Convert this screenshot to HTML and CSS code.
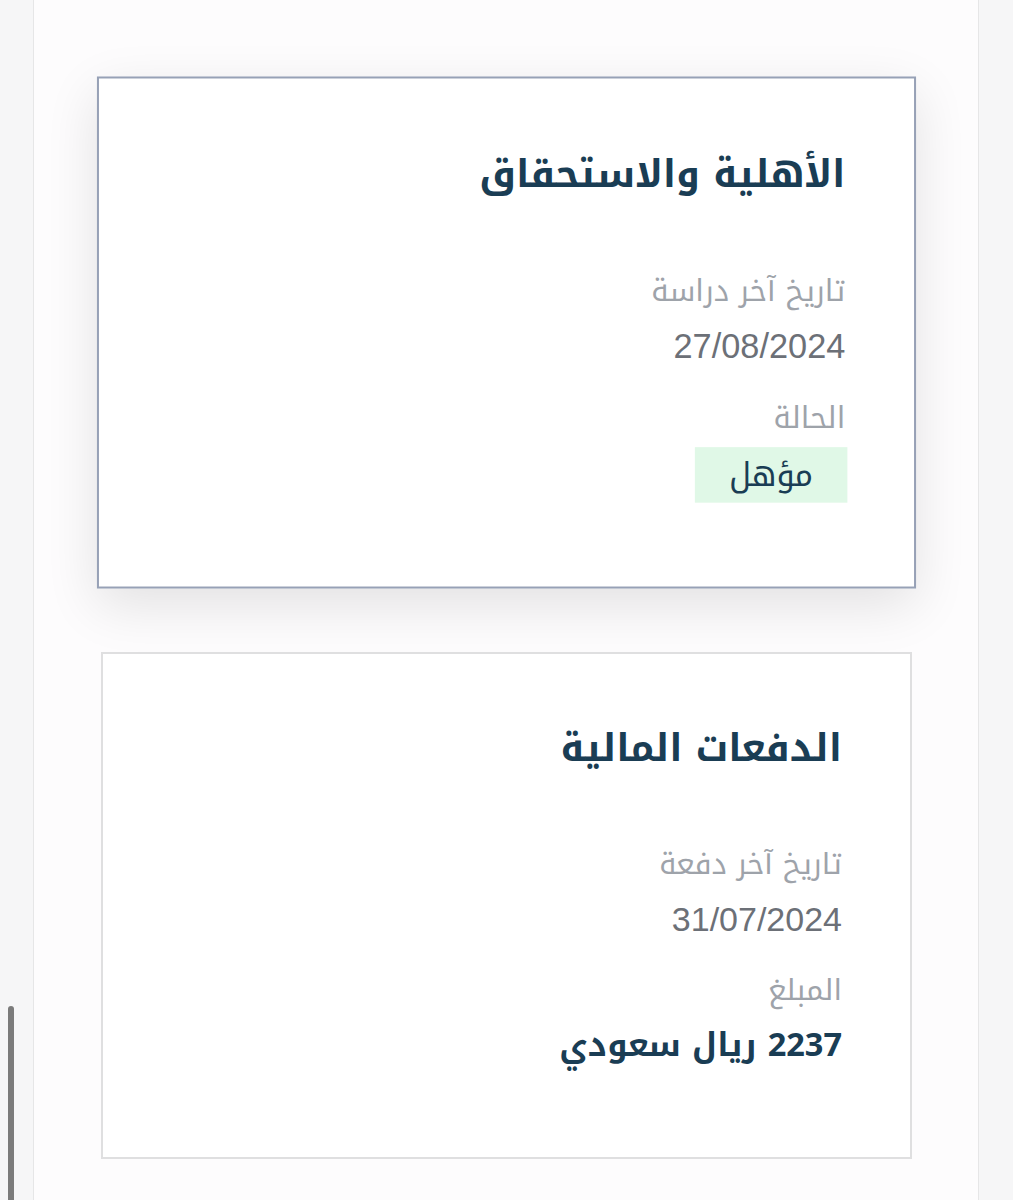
FILE: index.html
```html
<!DOCTYPE html>
<html lang="ar" dir="rtl">
<head>
    <meta charset="UTF-8">
    <meta name="viewport" content="width=device-width, initial-scale=1.0">
    <title>الأهلية والدفعات</title>
    <link rel="stylesheet" href="styles.css">
</head>
<body>
    <div class="scrollbar"></div>

    <main class="page">
        <div class="card card-active">
            <h2>الأهلية والاستحقاق</h2>
            <div class="field">
                <p class="field-label">تاريخ آخر دراسة</p>
                <p class="field-value">27/08/2024</p>
            </div>
            <div class="field">
                <p class="field-label">الحالة</p>
                <span class="badge">مؤهل</span>
            </div>
        </div>

        <div class="card">
            <h2>الدفعات المالية</h2>
            <div class="field">
                <p class="field-label">تاريخ آخر دفعة</p>
                <p class="field-value">31/07/2024</p>
            </div>
            <div class="field">
                <p class="field-label">المبلغ</p>
                <p class="amount">2237 ريال سعودي</p>
            </div>
        </div>
    </main>
</body>
</html>
```
FILE: styles.css
```css
* {
    margin: 0;
    padding: 0;
    box-sizing: border-box;
}

body {
    background-color: #f6f6f7;
    font-family: 'Noto Kufi Arabic', 'Noto Sans Arabic', sans-serif;
    color: #1a3d54;
    min-height: 1200px;
}

.scrollbar {
    position: fixed;
    left: 8px;
    top: 1006px;
    width: 6px;
    height: 200px;
    border-radius: 3px;
    background-color: #7b7b7b;
}

.page {
    margin: 0 34px 0 33px;
    min-height: 1200px;
    background-color: #fdfcfd;
    border-left: 1px solid #e6e6e7;
    border-right: 1px solid #e6e6e7;
    padding: 79px 66px 40px 67px;
    display: flex;
    flex-direction: column;
    gap: 66px;
}

.card {
    background-color: #fff;
    border: 2px solid #dfdfe0;
    height: 507px;
    padding: 56px 68px 0;
}

.card-active {
    transform: scale(1.01);
    border-color: #97a1b6;
    box-shadow: 0 16px 50px rgba(0, 0, 0, 0.11);
}

h2 {
    font-size: 38px;
    font-weight: 700;
    line-height: 76px;
    color: #1a3d54;
    margin-bottom: 56px;
}

.field {
    margin-bottom: 27px;
}

.field-label {
    font-size: 29.5px;
    font-weight: 400;
    line-height: 44px;
    color: #9ea3aa;
    margin-bottom: 11px;
}

.field-value {
    font-family: 'Liberation Sans', 'Noto Kufi Arabic', sans-serif;
    font-size: 34px;
    line-height: 44px;
    color: #6c7077;
}

.badge {
    display: block;
    width: fit-content;
    margin: -4px -2px 0 0;
    background-color: #e0f8e7;
    color: #1a3d54;
    font-size: 32px;
    line-height: 55px;
    min-width: 151px;
    padding: 0 30px;
    text-align: center;
}

.amount {
    font-size: 32.5px;
    font-weight: 700;
    line-height: 44px;
    color: #1a3d54;
}
```
